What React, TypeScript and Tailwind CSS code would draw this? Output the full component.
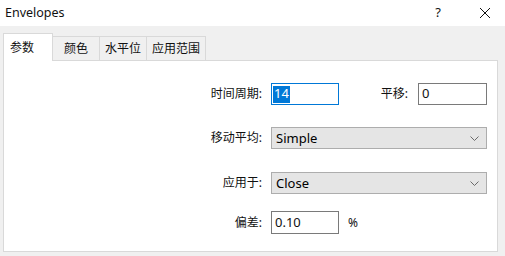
import React from "react";

const font = { fontFamily: '"Noto Sans", "Noto Sans CJK SC", sans-serif' };

function Chevron() {
  return (
    <svg width="9" height="5" viewBox="0 0 9 5" className="mr-[7px]">
      <path d="M0.5 0.5 L4.5 4.5 L8.5 0.5" fill="none" stroke="#6a6a6a" strokeWidth="1" />
    </svg>
  );
}

function Select({ value }: { value: string }) {
  return (
    <div className="ml-[9px] w-[216px] h-[22px] bg-[#e5e5e5] border border-[#adadad] flex items-center justify-between">
      <span className="pl-[4px] text-[13px] text-black leading-none">{value}</span>
      <Chevron />
    </div>
  );
}

export default function App() {
  const tabs = ["颜色", "水平位", "应用范围"];
  const tabW = ["w-[47px]", "w-[47px]", "w-[59px]"];
  return (
    <div className="w-[505px] h-[256px] bg-[#f0f0f0] flex flex-col text-[12px] text-[#111] overflow-hidden" style={font}>
      <div className="h-[26px] bg-white flex items-center justify-between shrink-0">
        <span className="pl-[5px] text-[12.5px]">Envelopes</span>
        <div className="flex items-center">
          <span className="text-[13px] mr-[38px]">?</span>
          <svg width="12" height="12" viewBox="0 0 12 12" className="mr-[14px]">
            <path d="M1 1 L11 11 M11 1 L1 11" stroke="#111" strokeWidth="1" />
          </svg>
        </div>
      </div>
      <div className="pl-[3px] pt-[6px] flex items-end h-[34px] shrink-0">
        <div className="w-[50px] h-[28px] bg-white border border-b-0 border-[#d9d9d9] relative z-10 mb-[-1px] pl-[6px] pt-[5px]">
          参数
        </div>
        {tabs.map((t, i) => (
          <div
            key={t}
            className={`${tabW[i]} h-[24px] border border-b-0 border-l-0 border-[#d9d9d9] bg-[#f0f0f0] flex items-center justify-center`}
          >
            {t}
          </div>
        ))}
      </div>
      <div className="ml-[3px] w-[495px] h-[192px] bg-white border border-[#d9d9d9] flex flex-col pt-[22px]">
        <div className="flex items-center h-[22px]">
          <div className="w-[258px] text-right">时间周期:</div>
          <div className="ml-[9px] w-[68px] h-[22px] border border-[#0078d7] flex items-center pl-[1px]">
            <span className="bg-[#0078d7] text-white text-[13px] h-[17px] px-[1px] flex items-center">14</span>
          </div>
          <div className="w-[69px] text-right">平移:</div>
          <div className="ml-[10px] w-[69px] h-[22px] border border-[#7a7a7a] flex items-center pl-[3px] text-[13px]">0</div>
        </div>
        <div className="flex items-center h-[22px] mt-[22px]">
          <div className="w-[258px] text-right">移动平均:</div>
          <Select value="Simple" />
        </div>
        <div className="flex items-center h-[22px] mt-[23px]">
          <div className="w-[258px] text-right">应用于:</div>
          <Select value="Close" />
        </div>
        <div className="flex items-center h-[23px] mt-[17px]">
          <div className="w-[258px] text-right">偏差:</div>
          <div className="ml-[9px] w-[68px] h-[23px] border border-[#7a7a7a] flex items-center pl-[3px] text-[13px]">0.10</div>
          <span className="ml-[9px] text-[12px]">%</span>
        </div>
      </div>
    </div>
  );
}
